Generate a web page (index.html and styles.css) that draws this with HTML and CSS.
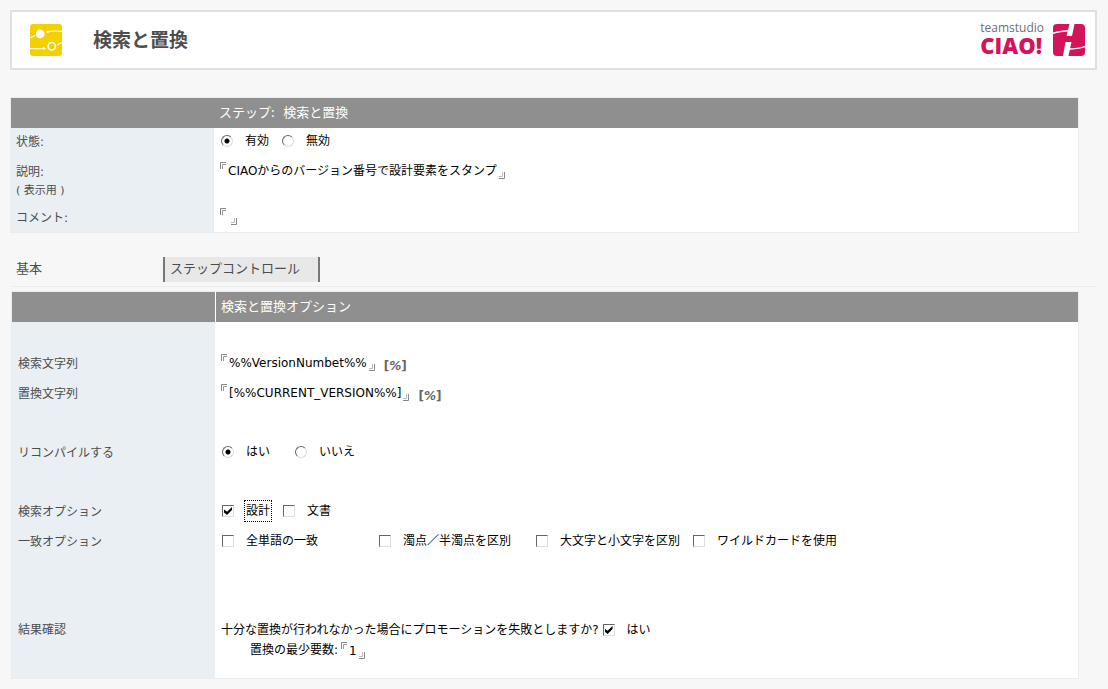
FILE: index.html
```html
<!DOCTYPE html>
<html lang="ja">
<head>
<meta charset="utf-8">
<meta name="viewport" content="width=device-width, initial-scale=1">
<title>検索と置換</title>
<link rel="stylesheet" href="styles.css">
</head>
<body>
<svg class="defs" aria-hidden="true">
  <symbol id="open" viewBox="0 0 6 7"><path d="M.5 7V.5H6" fill="none" stroke="#888"/><path d="M2.500 7V2.500H6" fill="none" stroke="#999"/></symbol>
  <symbol id="close" viewBox="0 0 6 7"><path d="M5.500 0V6.500H0" fill="none" stroke="#888"/><path d="M3.500 0V4.500H0" fill="none" stroke="#bbb"/></symbol>
</svg>

<header class="banner">
  <svg class="banner-icon" viewBox="0 0 32 32" aria-hidden="true">
    <rect width="32" height="32" rx="3" fill="#f3d000"/>
    <circle cx="10.200" cy="10" r="4.400" fill="#fff"/>
    <circle cx="21.800" cy="22.300" r="3.700" fill="none" stroke="#fff" stroke-width="1.500"/>
    <path d="M0 14 5 11.500M17 8q7-1.500 15-.7M0 24.500q7 .8 14 0M27 21l5-2.500" fill="none" stroke="#fff" stroke-width="1.200"/>
    <path d="M15.500 8l3-1.800v3zM16.500 24.500l-3.500-1.600v3.200z" fill="#fff"/>
  </svg>
  <h1 class="title">検索と置換</h1>
  <div class="brand">
    <div class="brand-name">
      <span class="brand-top">teamstudio</span>
      <span class="brand-main">CIAO!</span>
    </div>
    <svg class="brand-icon" viewBox="0 0 32 32" aria-hidden="true">
      <rect width="32" height="32" rx="4" fill="#d4145a"/>
      <path d="M16.500 0h5L19 12h-5.500zM12.500 18h6L15.500 32H10z" fill="#fff"/>
      <path d="M0 9.300Q7 7 17 6.800" fill="none" stroke="#fff" stroke-width="1.400"/>
      <path d="M32 22.600Q25 24.800 15 25" fill="none" stroke="#fff" stroke-width="1.400"/>
    </svg>
  </div>
</header>

<main>
  <section class="panel">
    <h2 class="head"><span></span><span class="head-text">ステップ:&nbsp;&nbsp; 検索と置換</span></h2>
    <div class="row">
      <div class="name" id="l-state">状態:</div>
      <div class="value choices" role="radiogroup" aria-labelledby="l-state">
        <label class="choice short"><input class="radio" type="radio" name="state" checked><span>有効</span></label>
        <label class="choice"><input class="radio" type="radio" name="state"><span>無効</span></label>
      </div>
    </div>
    <div class="row note">
      <label class="name" for="desc">説明:<br><span class="sub">( 表示用 )</span></label>
      <div class="value"><span class="field"><svg class="open"><use href="#open"/></svg><input class="text" id="desc" value="CIAOからのバージョン番号で設計要素をスタンプ"><svg class="close"><use href="#close"/></svg></span></div>
    </div>
    <div class="row short-row">
      <label class="name" for="comment">コメント:</label>
      <div class="value"><span class="field"><svg class="open"><use href="#open"/></svg><input class="text" id="comment" value=""><svg class="close"><use href="#close"/></svg></span></div>
    </div>
  </section>

  <nav class="tabs">
    <button class="tab current" type="button">基本</button>
    <button class="tab other" type="button">ステップコントロール</button>
  </nav>

  <section class="panel options">
    <h2 class="head"><span></span><span class="head-text">検索と置換オプション</span></h2>
    <div class="row short-row"><div class="name"></div><div class="value"></div></div>
    <div class="row">
      <label class="name" for="find">検索文字列</label>
      <div class="value"><span class="field"><svg class="open"><use href="#open"/></svg><input class="text" id="find" value="%%VersionNumbet%%"><svg class="close"><use href="#close"/></svg></span><button class="insert" type="button">[<i>%</i>]</button></div>
    </div>
    <div class="row wide">
      <label class="name" for="replace">置換文字列</label>
      <div class="value"><span class="field"><svg class="open"><use href="#open"/></svg><input class="text" id="replace" value="[%%CURRENT_VERSION%%]"><svg class="close"><use href="#close"/></svg></span><button class="insert" type="button">[<i>%</i>]</button></div>
    </div>
    <div class="row wide">
      <div class="name" id="l-rec">リコンパイルする</div>
      <div class="value choices" role="radiogroup" aria-labelledby="l-rec">
        <label class="choice long"><input class="radio" type="radio" name="rec" checked><span>はい</span></label>
        <label class="choice"><input class="radio" type="radio" name="rec"><span>いいえ</span></label>
      </div>
    </div>
    <div class="row">
      <div class="name" id="l-opt">検索オプション</div>
      <div class="value choices" role="group" aria-labelledby="l-opt">
        <label class="choice short"><input class="check" type="checkbox" checked><span class="focused">設計</span></label>
        <label class="choice"><input class="check" type="checkbox"><span>文書</span></label>
      </div>
    </div>
    <div class="row tall">
      <div class="name" id="l-match">一致オプション</div>
      <div class="value choices" role="group" aria-labelledby="l-match">
        <label class="choice col"><input class="check" type="checkbox"><span>全単語の一致</span></label>
        <label class="choice col"><input class="check" type="checkbox"><span>濁点／半濁点を区別</span></label>
        <label class="choice col"><input class="check" type="checkbox"><span>大文字と小文字を区別</span></label>
        <label class="choice"><input class="check" type="checkbox"><span>ワイルドカードを使用</span></label>
      </div>
    </div>
    <div class="row last">
      <div class="name">結果確認</div>
      <div class="value stack">
        <div class="line"><span id="q">十分な置換が行われなかった場合にプロモーションを失敗としますか?</span><label class="choice"><input class="check" type="checkbox" checked aria-describedby="q"><span>はい</span></label></div>
        <div class="line indent"><label for="min">置換の最少要数:</label><span class="field"><svg class="open"><use href="#open"/></svg><input class="text" id="min" value="1"><svg class="close"><use href="#close"/></svg></span></div>
      </div>
    </div>
  </section>
</main>
</body>
</html>
```

FILE: styles.css
```css
* { box-sizing: border-box; }

body {
  margin: 0;
  padding: 10px 11px 9px 10px;
  background: #f7f7f7;
  color: #000;
  font: 12px/18px "DejaVu Sans", "Noto Sans CJK JP", sans-serif;
}

button, input { margin: 0; font: inherit; color: inherit; }

.defs { display: none; }

.banner {
  display: flex;
  align-items: center;
  height: 60px;
  padding: 0 10px 0 18px;
  border: 2px solid #e0e0e0;
  background: #fff;
}

.banner-icon { width: 32px; height: 32px; }

.title {
  margin: 0 0 2px 31px;
  color: #4d4d4d;
  font: bold 19px/28px "Noto Sans CJK JP", sans-serif;
}

.brand { display: flex; align-items: center; gap: 9px; margin-left: auto; }
.brand-name { display: flex; flex-direction: column; padding-bottom: 6px; }
.brand-top { color: #6e6e6e; font: 500 12px/16px "Open Sans", sans-serif; }
.brand-main { color: #d4145a; font: 800 22px/18px "Open Sans", sans-serif; }
.brand-icon { width: 32px; height: 32px; }

.panel {
  margin: 27px 18px 0 0;
  border: 1px solid #ececec;
  background: #fff;
}

.head {
  display: grid;
  grid-template-columns: 203px 1fr;
  height: 30px;
  margin: 0;
  background: #8f8f8f;
  color: #fff;
  font: 13px/28px "Noto Sans CJK JP", sans-serif;
}

.head-text { padding-left: 5px; }

.row {
  display: grid;
  grid-template-columns: 203px 1fr;
  min-height: 30px;
}

.name { padding: 5px 5px 4px; background: #eaeff3; color: #4d4d4d; }
.value { display: flex; align-items: flex-start; padding: 4px 7px 3px; }
.note { min-height: 45px; }
.sub { font-size: 11px; }

.tabs {
  display: flex;
  height: 32px;
  margin: 22px 2px 0;
  padding: 2px 0 4px;
  border-bottom: 1px solid #ececec;
}

.tab {
  padding: 0 4px 4px;
  border: 0;
  background: none;
  color: #4d4d4d;
  font: 13px/20px "Noto Sans CJK JP", sans-serif;
  text-align: left;
}

.current { width: 151px; }
.other { width: 157px; padding: 0 5px 4px; border: solid #777; border-width: 0 2px; background: #e8e8e8; }

.options { margin-top: 4px; margin-left: 1px; }
.options .name { padding-left: 6px; }
.options .head-text { border-left: 1px solid #fff; }

.short-row { min-height: 28px; }
.wide { min-height: 59px; }
.tall { min-height: 88px; }
.last { min-height: 62px; }

.choice { display: flex; align-items: center; gap: 12px; }
.short { width: 61px; }
.long { width: 73px; }
.col { width: 157px; }
.choice span { white-space: nowrap; }
.focused { outline: 1px dotted #000; outline-offset: 1px; }

.radio, .check {
  flex: none;
  width: 12px;
  height: 12px;
  appearance: none;
  border: 1px solid;
  border-color: #666 #ddd #ddd #666;
  background: #fff;
}

.radio { border-radius: 50%; }
.radio:checked { background: radial-gradient(circle, #000 2px, #fff 3px); }
.check { padding: 1px; }

.check:checked::before {
  content: "";
  display: block;
  width: 8px;
  height: 8px;
  background: #000;
  clip-path: polygon(0 30%, 38% 60%, 100% 0, 100% 38%, 38% 100%, 0 70%);
}

.field { display: flex; height: 17px; margin-left: -1px; }
.open, .close { flex: none; width: 6px; height: 7px; }
.close { align-self: flex-end; margin-left: 2px; }

.text {
  field-sizing: content;
  min-width: 2px;
  height: 18px;
  padding: 0 0 0 2px;
  border: 0;
  background: none;
  outline: 0;
}

.insert {
  margin: 3px 0 0 9px;
  padding: 0;
  border: 0;
  background: none;
  color: #666;
  font-weight: bold;
}

.stack { flex-direction: column; padding-left: 6px; }
.line { display: flex; align-items: center; gap: 4px; height: 20px; }
.indent { padding-left: 29px; }
```
